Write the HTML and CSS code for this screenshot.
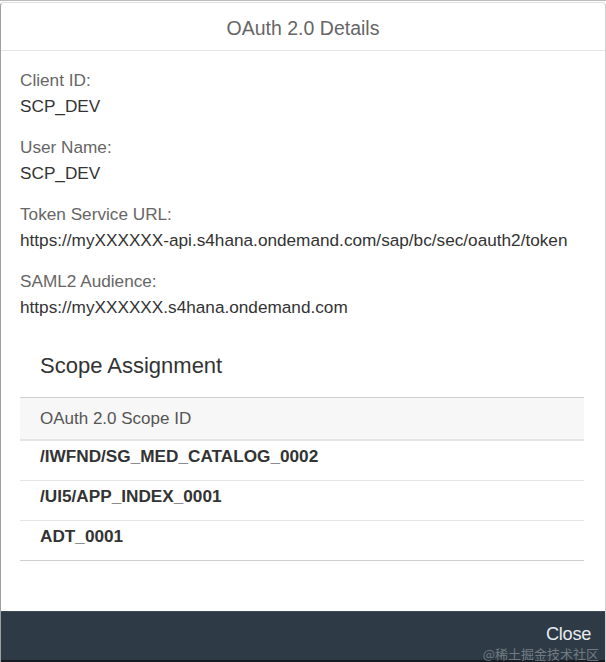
FILE: index.html
```html
<!DOCTYPE html>
<html>
<head>
<meta charset="utf-8">
<link rel="stylesheet" href="styles.css">
</head>
<body>
<div class="backdrop"></div>
<div class="dialog">
  <header class="dlg-header">OAuth 2.0 Details</header>
  <main class="dlg-content">
    <div class="field">
      <div class="label">Client ID:</div>
      <div class="value">SCP_DEV</div>
    </div>
    <div class="field">
      <div class="label">User Name:</div>
      <div class="value">SCP_DEV</div>
    </div>
    <div class="field">
      <div class="label">Token Service URL:</div>
      <div class="value">https://myXXXXXX-api.s4hana.ondemand.com/sap/bc/sec/oauth2/token</div>
    </div>
    <div class="field">
      <div class="label">SAML2 Audience:</div>
      <div class="value">https://myXXXXXX.s4hana.ondemand.com</div>
    </div>
    <h2 class="section-title">Scope Assignment</h2>
    <div class="table">
      <div class="th">OAuth 2.0 Scope ID</div>
      <div class="tr">/IWFND/SG_MED_CATALOG_0002</div>
      <div class="tr">/UI5/APP_INDEX_0001</div>
      <div class="tr last">ADT_0001</div>
    </div>
  </main>
  <footer class="dlg-footer">
    <span class="close-btn">Close</span>
    <span class="watermark">@稀土掘金技术社区</span>
  </footer>
</div>
</body>
</html>
```
FILE: styles.css
```css
html, body {
  margin: 0;
  padding: 0;
  background: #fff;
}
body {
  width: 606px;
  height: 662px;
  overflow: hidden;
  font-family: "Liberation Sans", Arial, "Noto Sans CJK SC", sans-serif;
}
.backdrop {
  height: 2px;
  background: linear-gradient(180deg, rgba(60,60,60,0.35) 0 1px, #fff 1px);
}
.dialog {
  height: 660px;
  box-sizing: border-box;
  border: 1px solid #a0a0a0;
  border-right-color: #d0d0d0;
  border-top-color: #e0e0e0;
  border-bottom: none;
  border-radius: 4px 4px 0 0;
  display: flex;
  flex-direction: column;
  overflow: hidden;
  background: #fff;
}
.dlg-header {
  height: 47px;
  flex: none;
  border-bottom: 1px solid #e5e5e5;
  text-align: center;
  line-height: 50px;
  font-size: 19.5px;
  color: #666;
}
.dlg-content {
  flex: 1;
  padding: 16px 20px 0 19px;
}
.field {
  margin-bottom: 15px;
  font-size: 17.2px;
  line-height: 26px;
}
.label {
  color: #666;
}
.value {
  color: #333;
}
.section-title {
  margin: 33px 0 18px 20px;
  font-size: 22px;
  font-weight: normal;
  line-height: 26px;
  color: #333;
}
.table {
  width: 564px;
  font-size: 17.2px;
}
.th {
  height: 41px;
  line-height: 41px;
  background: #f7f7f7;
  border-top: 1px solid #d0d0d0;
  border-bottom: 2px solid #e5e5e5;
  color: #555;
  padding-left: 20px;
  font-size: 17px;
}
.tr {
  height: 39px;
  line-height: 31px;
  border-bottom: 1px solid #e5e5e5;
  padding-left: 20px;
  font-weight: bold;
  color: #333;
}
.tr.last {
  border-bottom-color: #cfcfcf;
}
.dlg-footer {
  height: 48px;
  flex: none;
  background: #2e3b46;
  border-top: 1px solid #3c4954;
  border-bottom: 2px solid #161c22;
  position: relative;
}
.close-btn {
  position: absolute;
  right: 14px;
  top: 13px;
  font-size: 18.2px;
  line-height: 1;
  color: #e8ecef;
  letter-spacing: -0.3px;
}
.watermark {
  position: absolute;
  right: 6px;
  top: 35px;
  font-size: 13px;
  line-height: 1;
  color: rgba(200, 205, 210, 0.45);
  font-family: "Noto Sans CJK SC", sans-serif;
}
```
